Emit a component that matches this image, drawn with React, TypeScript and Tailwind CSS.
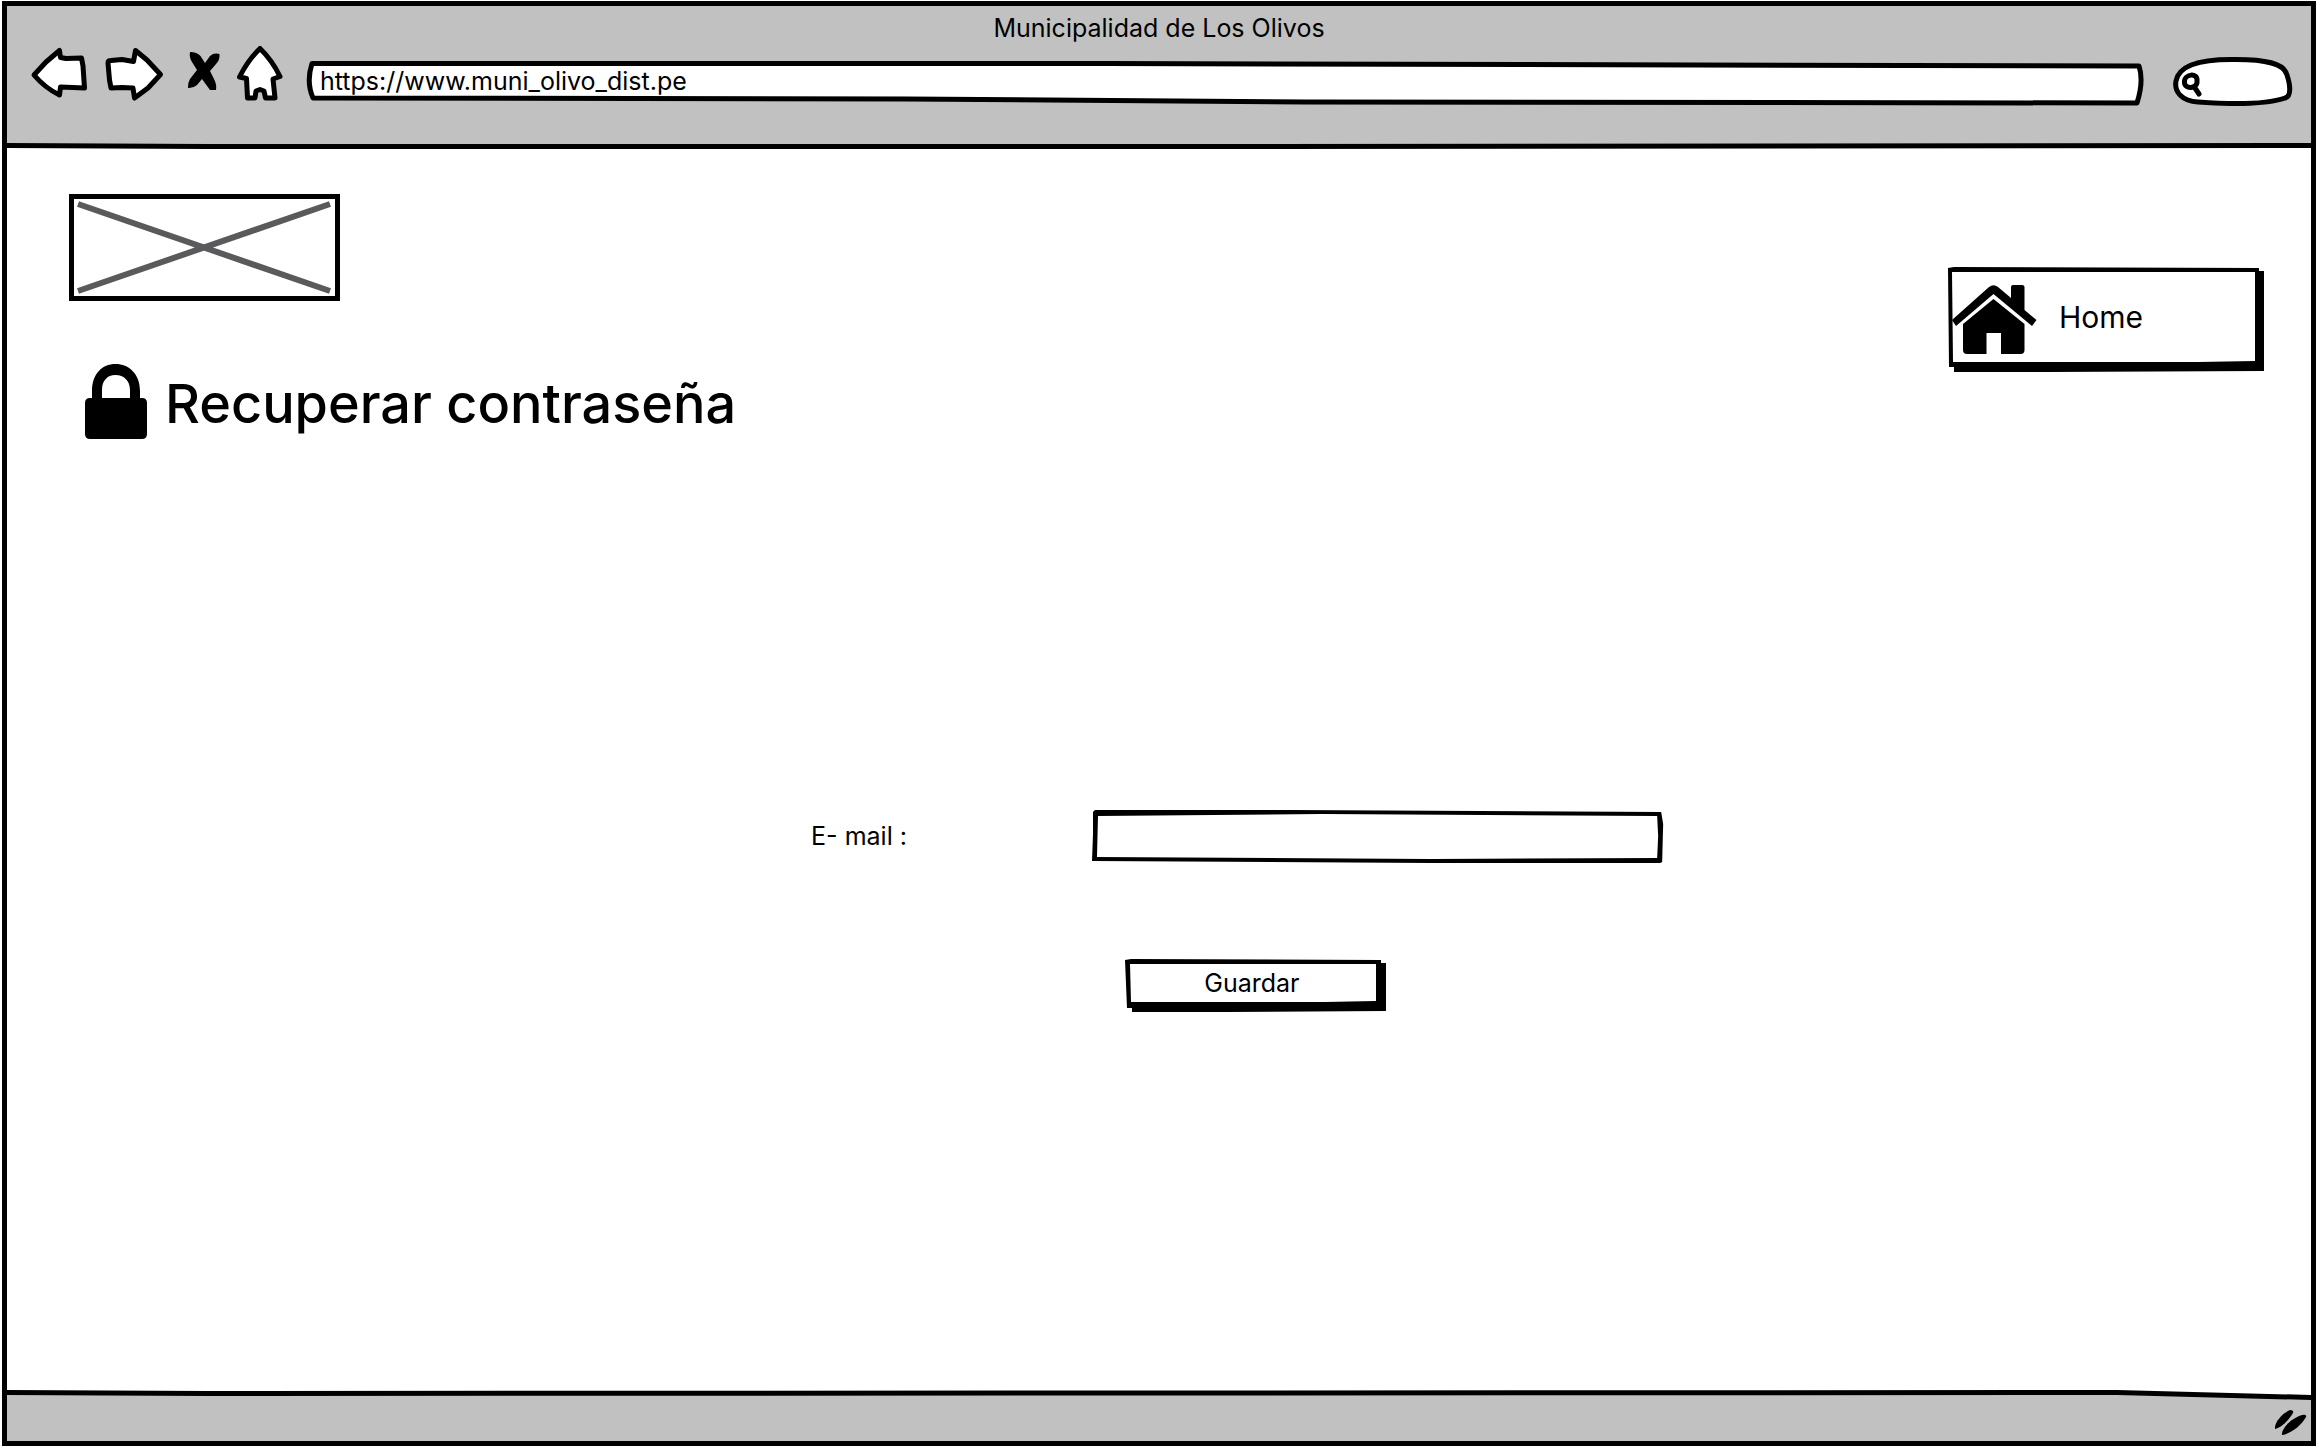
import type { ReactNode } from "react";

/** Hand-drawn outline that stretches behind its parent's content. */
function Sketch({ viewBox, children }: { viewBox: string; children: ReactNode }) {
  return (
    <svg
      className="pointer-events-none absolute inset-0 h-full w-full"
      viewBox={viewBox}
      preserveAspectRatio="none"
      aria-hidden="true"
    >
      {children}
    </svg>
  );
}

const outline = {
  fill: "#fff",
  stroke: "#000",
  strokeWidth: 5,
  strokeLinejoin: "round" as const,
  strokeLinecap: "round" as const,
};

function BrowserBar() {
  return (
    <header className="bg-[#c1c1c1] pt-1.5">
      <div className="text-center text-[25px] leading-8">Municipalidad de Los Olivos</div>
      <div className="flex items-end gap-5 pt-0.5 pr-[17px] pb-[37px] pl-[23px]">
        <nav className="flex gap-3">
          <button type="button" aria-label="Atrás">
            <svg className="h-[60px] w-[60px]" viewBox="30 46 60 60">
              <path {...outline} d="M34 75 L46 62 L59.5 50.5 L60.5 57.5 L66 58.5 L81.5 58 L83 66 L84.5 88 L60.5 87 L59.5 95 Q45 88 34 75 Z" />
            </svg>
          </button>
          <button type="button" aria-label="Adelante">
            <svg className="h-[60px] w-[64px]" viewBox="102 46 64 60">
              <path {...outline} d="M108 63 Q108 60.5 111 60.5 L122 59.5 L133.5 61.5 L135.5 50.5 L147 60 L160.5 74.5 L148 88 L134.5 98 L133 88 L122 87.5 L111 88 L109.5 80 Z" />
            </svg>
          </button>
          <button type="button" aria-label="Detener">
            <svg className="h-[60px] w-[44px]" viewBox="178 46 44 60">
              <path d="M190 52 Q197 52 200.500 56 L205 63 L210 56 Q214 52.500 219.500 54 Q220 60 216 64 L210 71 L214 79 Q217 85 216 90 H210 L202 79 L197 85 Q193 88.500 188 88 Q187.500 83 190 79 L197 70 L192 62 Q189 57 190 52 Z" />
            </svg>
          </button>
          <button type="button" aria-label="Inicio">
            <svg className="h-[60px] w-[52px]" viewBox="234 46 52 60">
              <path {...outline} d="M260 48.500 Q272 60 280 76.500 L273 79 L275 98 L265.500 98 L264 91 L260 89.500 L256 91 L255 98 L247.500 98 L246.500 78.500 L239.500 77 Q248 60 260 48.500 Z" />
            </svg>
          </button>
        </nav>
        <div className="relative h-[45px] flex-1">
          <Sketch viewBox="0 0 1838 45">
            <path {...outline} d="M6 2.500 L800 2.500 L1833 5 Q1838 20 1831 42 L1000 41 L600 38 L7 37 Q0 21 6 2.500 Z" />
          </Sketch>
          <input
            aria-label="Dirección"
            defaultValue="https://www.muni_olivo_dist.pe"
            className="relative block h-10 w-full bg-transparent px-3.5 text-[25px] leading-8 outline-none"
          />
        </div>
        <div className="relative ml-2 h-[50px] w-[122px]">
          <Sketch viewBox="2172 56 122 50">
            <path {...outline} d="M2198 102 C2182 101 2174 92 2176 81 C2179 63 2208 59 2236 59.500 C2265 59.500 2284 63 2287 75 C2290 84 2292 96 2285 98 C2268 104 2240 105 2198 102 Z" />
            <path {...outline} d="M2197 81 C2198 72 2184 74 2184.500 82 C2184 90 2198 89 2197 81 Z M2195 88 L2199 94" />
          </Sketch>
          <input type="search" aria-label="Buscar" className="relative block h-full w-full bg-transparent pr-3 pl-8 text-[25px] outline-none" />
        </div>
      </div>
    </header>
  );
}

function LockIcon() {
  return (
    <svg className="h-20 w-[62px]" viewBox="85 361 62 80" aria-hidden="true">
      <path
        fillRule="evenodd"
        d="M92 391 C92 374 102 364 115.500 364 C129 364 140 374 140 391 V398 H142 Q147 398 147 403 V434 Q147 439 142 439 H90 Q85 439 85 434 V403 Q85 398 90 398 H92 Z M102 398 H130 V390 C130 381 124 375 115.500 375 C107 375 102 381 102 390 Z"
      />
    </svg>
  );
}

function HouseIcon() {
  return (
    <svg className="h-[70px] w-[86px]" viewBox="1951 286 86 70" aria-hidden="true">
      <path d="M1952 321 L1989 288 Q1993.500 284.500 1998 288 L2011 299 V288 Q2011 286 2013 286 H2022 Q2024.500 286 2024.500 288 V311 L2036.500 321 L2032 327 L1993.500 295 L1956 327 Z" />
      <path d="M1963 325 L1993.500 300 L2024.500 325 V351 Q2024.500 355 2020.500 355 H2001 V334 H1986.500 V355 H1967 Q1963 355 1963 351 Z" />
    </svg>
  );
}

export default function App() {
  return (
    <div className="flex min-h-screen flex-col bg-white px-0.5 pt-px pb-0.5 font-['Inter',sans-serif] text-black">
      <div className="flex flex-1 flex-col border-[5px] border-black">
        <BrowserBar />
        <svg className="h-1.5 w-full bg-white" viewBox="0 0 2304 6" preserveAspectRatio="none" aria-hidden="true">
          <path fill="#c1c1c1" d="M0 0 H2304 V2 H0 Z" />
          <path d="M0 0 L200 1 L1200 1 L2304 0 V5 L1200 6 L200 6 L0 5 Z" />
        </svg>

        <main className="flex-1 pt-[45px]">
          <div className="flex items-start justify-between pr-[47px] pl-[62px]">
            <div>
              <svg className="h-[107px] w-[271px]" viewBox="0 0 271 107" role="img" aria-label="Logo">
                <rect x="2.500" y="2.500" width="266" height="102" fill="#fff" stroke="#000" strokeWidth="5" />
                <path d="M9 10 L261 97 M9 97 L261 10" stroke="#5a5a5c" strokeWidth="6" />
              </svg>
              <h1 className="mt-[57px] flex items-center gap-[18px] pl-4 text-[54px] leading-[80px] font-medium">
                <LockIcon />
                <span className="pt-1.5">Recuperar contraseña</span>
              </h1>
            </div>
            <button type="button" className="relative mt-[73px] flex h-[105px] w-[316px] items-center pl-[3px] text-3xl">
              <Sketch viewBox="0 0 316 105">
                <path d="M0 1 L6 0 L311 1 V4 H316 V104 L100 105 H6 V100 H1 Z" />
                <path fill="#fff" d="M4 5 L307 5 V94 L250 95 L5 95 Z" />
              </Sketch>
              <span className="relative flex items-center gap-[22px] pt-px">
                <HouseIcon />
                <span className="pb-1.5">Home</span>
              </span>
            </button>
          </div>

          <form
            className="mt-[366px] mr-[28.1%] ml-[34.9%] grid grid-cols-[33%_67%] items-center gap-y-24 text-[25px]"
            onSubmit={(e) => e.preventDefault()}
          >
            <label htmlFor="email">E- mail :</label>
            <div className="relative h-[53px]">
              <Sketch viewBox="0 0 572 53">
                <path d="M1 2 L3 0 L200 0 L570 2 L572 14 L571 52 L569 53 L340 53 L0 51 L1 24 Z" />
                <path fill="#fff" d="M6 6 L230 4 L566 6 L567 26 L566 48 L340 49 L5 47 Z" />
              </Sketch>
              <input id="email" type="email" className="relative block h-full w-full bg-transparent px-4 outline-none" />
            </div>
            <button type="submit" className="relative col-start-2 ml-[33px] h-[53px] w-[261px] pr-2 pb-1">
              <Sketch viewBox="0 0 261 53">
                <path d="M0 1 L6 0 L256 1 V4 H261 V52 L100 53 H7 V49 H2 Z" />
                <path fill="#fff" d="M5 5 L251 5 V42 L200 43 L6 43 Z" />
              </Sketch>
              <span className="relative">Guardar</span>
            </button>
          </form>
        </main>

        <svg className="h-2.5 w-full bg-[#c1c1c1]" viewBox="0 0 2304 10" preserveAspectRatio="none" aria-hidden="true">
          <path fill="#fff" d="M0 0 H2304 V7 L2110 3 H0 Z" />
          <path d="M0 0 L200 1 L2110 0 L2304 5 V10 L2110 5 L200 6 L0 5 Z" />
        </svg>
        <footer className="flex h-[41px] items-start justify-end bg-[#c1c1c1] pr-1">
          <svg className="mt-2 h-7 w-8" viewBox="2275 1408 32 28" aria-hidden="true">
            <path d="M2275 1429 C2274 1423 2282 1413 2290 1410 Q2294 1410 2293 1413 C2288 1421 2281 1428 2275 1429 Z" />
            <path d="M2282 1435 C2281 1428 2292 1418 2302 1415 Q2307 1414 2306 1417 C2301 1426 2290 1434 2282 1435 Z" />
          </svg>
        </footer>
      </div>
    </div>
  );
}
